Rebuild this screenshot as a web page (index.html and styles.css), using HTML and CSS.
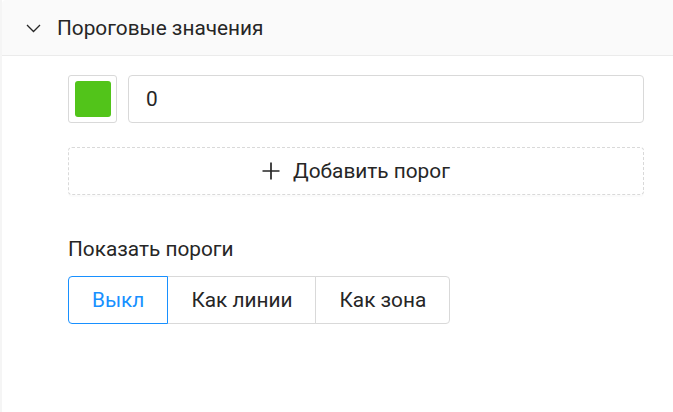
FILE: index.html
```html
<!DOCTYPE html>
<html lang="ru">
<head>
  <meta charset="UTF-8" />
  <meta name="viewport" content="width=device-width, initial-scale=1.0"/>
  <title>Пороговые значения</title>
  <link rel="stylesheet" href="styles.css">
</head>
<body>
  <div class="panel">
    <div class="panel-header">
      <svg class="arrow" width="15" height="9" viewBox="0 0 15 9">
        <path d="M1 1 L7.5 7.5 L14 1" fill="none" stroke="#262626" stroke-width="1.3"/>
      </svg>
      <span class="panel-title">Пороговые значения</span>
    </div>

    <div class="panel-body">
      <div class="threshold-row">
        <div class="swatch"><span class="swatch-color"></span></div>
        <div class="value-input">0</div>
      </div>

      <button class="add-btn">
        <svg width="18" height="18" viewBox="0 0 18 18">
          <path d="M9 0.5 V17.5 M0.5 9 H17.5" stroke="#262626" stroke-width="1.7"/>
        </svg>
        <span>Добавить порог</span>
      </button>

      <div class="field-label">Показать пороги</div>
      <div class="radio-group">
        <span class="radio-btn active">Выкл</span>
        <span class="radio-btn">Как линии</span>
        <span class="radio-btn">Как зона</span>
      </div>
    </div>
  </div>
</body>
</html>
```

FILE: styles.css
```css
body {
  margin: 0;
  font-family: Roboto, "Liberation Sans", sans-serif;
  font-size: 20.8px;
  color: #262626;
  background: #f5f5f5;
}

.panel {
  margin-left: 2px;
  min-height: 412px;
  background: #fff;
}

.panel-header {
  height: 55px;
  display: flex;
  align-items: center;
  padding-left: 24px;
  background: #fafafa;
  border-bottom: 1px solid #ebebeb;
  border-radius: 4px 0 0 0;
}

.arrow {
  margin-right: 16px;
  margin-top: 1px;
}

.panel-title {
  color: #262626;
}

.panel-body {
  padding: 19px 29px 0 66px;
}

.threshold-row {
  display: flex;
  gap: 11px;
}

.swatch {
  width: 47px;
  height: 46px;
  border: 1px solid #d9d9d9;
  border-radius: 3px;
  display: flex;
  align-items: center;
  justify-content: center;
}

.swatch-color {
  width: 36px;
  height: 36px;
  background: #52c41a;
  border-radius: 3px;
}

.value-input {
  flex: 1;
  height: 46px;
  border: 1px solid #d9d9d9;
  border-radius: 4px;
  padding-left: 17px;
  display: flex;
  align-items: center;
}

.add-btn {
  margin-top: 24px;
  width: 100%;
  height: 48px;
  border: 1px dashed #d9d9d9;
  border-radius: 4px;
  background: #fff;
  display: flex;
  align-items: center;
  justify-content: center;
  gap: 13px;
  font-family: inherit;
  font-size: inherit;
  color: #262626;
  box-shadow: 0 2px 0 rgba(0, 0, 0, 0.015);
}

.field-label {
  margin-top: 39px;
  line-height: 30px;
}

.radio-group {
  margin-top: 12px;
  display: flex;
}

.radio-btn {
  height: 46px;
  padding: 0 23px;
  border: 1px solid #d9d9d9;
  margin-left: -1px;
  display: flex;
  align-items: center;
  background: #fff;
}

.radio-btn:first-child {
  margin-left: 0;
  border-radius: 4px 0 0 4px;
}

.radio-btn:last-child {
  border-radius: 0 4px 4px 0;
}

.radio-btn.active {
  color: #1890ff;
  border-color: #1890ff;
  position: relative;
}
```
